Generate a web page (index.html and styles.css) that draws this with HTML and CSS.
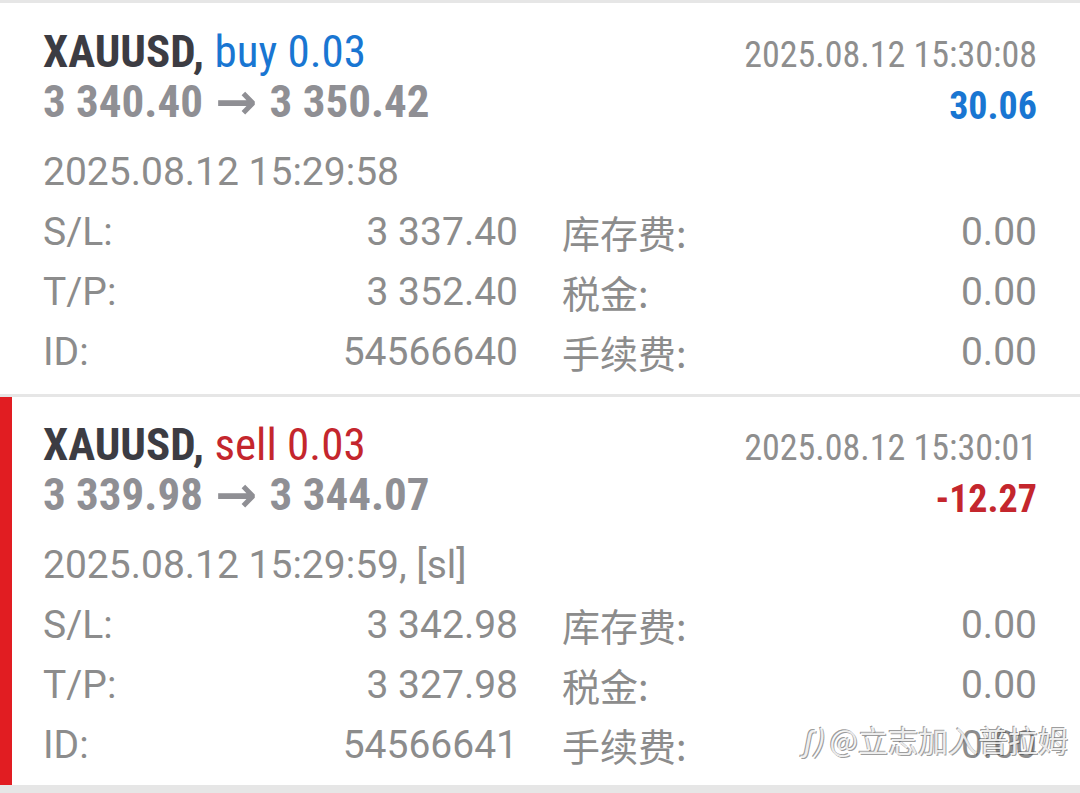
FILE: index.html
```html
<!DOCTYPE html>
<html lang="zh">
<head>
<meta charset="utf-8">
<title>Positions</title>
<link rel="stylesheet" href="styles.css">
</head>
<body>
<div class="page">
  <section class="deal">
    <div class="head">
      <div class="head-left">
        <div class="title"><span class="sym">XAUUSD,</span> <span class="buy">buy 0.03</span></div>
        <div class="prices">3 340.40 <span class="arrow">→</span> 3 350.42</div>
      </div>
      <div class="head-right">
        <div class="time">2025.08.12 15:30:08</div>
        <div class="profit buy-profit">30.06</div>
      </div>
    </div>
    <div class="open-time">2025.08.12 15:29:58</div>
    <div class="grid">
      <div class="cell"><span>S/L:</span><span>3 337.40</span></div>
      <div class="cell"><span class="cjk">库存费:</span><span>0.00</span></div>
      <div class="cell"><span>T/P:</span><span>3 352.40</span></div>
      <div class="cell"><span class="cjk">税金:</span><span>0.00</span></div>
      <div class="cell"><span>ID:</span><span>54566640</span></div>
      <div class="cell"><span class="cjk">手续费:</span><span>0.00</span></div>
    </div>
  </section>
  <section class="deal selected">
    <div class="head">
      <div class="head-left">
        <div class="title"><span class="sym">XAUUSD,</span> <span class="sell">sell 0.03</span></div>
        <div class="prices">3 339.98 <span class="arrow">→</span> 3 344.07</div>
      </div>
      <div class="head-right">
        <div class="time">2025.08.12 15:30:01</div>
        <div class="profit sell-profit">-12.27</div>
      </div>
    </div>
    <div class="open-time">2025.08.12 15:29:59, [sl]</div>
    <div class="grid">
      <div class="cell"><span>S/L:</span><span>3 342.98</span></div>
      <div class="cell"><span class="cjk">库存费:</span><span>0.00</span></div>
      <div class="cell"><span>T/P:</span><span>3 327.98</span></div>
      <div class="cell"><span class="cjk">税金:</span><span>0.00</span></div>
      <div class="cell"><span>ID:</span><span>54566641</span></div>
      <div class="cell"><span class="cjk">手续费:</span><span>0.00</span></div>
    </div>
    <div class="watermark"><span class="wm-logo">ʃ)</span> @立志加入普拉姆</div>
  </section>
</div>
</body>
</html>
```
FILE: styles.css
```css
html, body {
  margin: 0;
  padding: 0;
  background: #e6e6e6;
}
.page {
  width: 1080px;
  height: 793px;
  padding-top: 3px;
  box-sizing: border-box;
  display: flex;
  flex-direction: column;
  gap: 3px;
}
.deal {
  position: relative;
  background: #ffffff;
  padding: 24px 43px 10px 43px;
  height: 391px;
  box-sizing: border-box;
}
.deal.selected {
  height: 388px;
  padding-top: 23px;
  border-left: 12px solid #e11d22;
  padding-left: 31px;
}
.head {
  display: flex;
  justify-content: space-between;
  font-family: "Roboto Condensed", Roboto, sans-serif;
  font-stretch: 75%;
}
.title, .prices {
  height: 50px;
  line-height: 50px;
  font-weight: bold;
  white-space: nowrap;
}
.title {
  font-size: 45px;
}
.sym { color: #3c3c43; }
.buy { color: #1976d2; font-weight: normal; }
.sell { color: #c4262d; font-weight: normal; }
.prices {
  font-size: 45px;
  color: #8f8f94;
}
.arrow {
  display: inline-block;
  margin: 0 2px;
  font-family: "DejaVu Sans", sans-serif;
  font-weight: bold;
  font-size: 50px;
  font-stretch: normal;
  line-height: 50px;
  vertical-align: top;
}
.head-right {
  text-align: right;
}
.time {
  height: 50px;
  line-height: 56px;
  font-size: 36px;
  color: #8e8e8e;
}
.profit {
  height: 50px;
  line-height: 58px;
  font-size: 38px;
  font-weight: bold;
}
.buy-profit { color: #1976d2; }
.sell-profit { color: #c4262d; }
.open-time, .cell {
  font-family: Roboto, "Noto Sans CJK SC", sans-serif;
  font-size: 39px;
  color: #8c8c8c;
  height: 60px;
  line-height: 60px;
  white-space: nowrap;
}
.open-time {
  margin-top: 15px;
}
.grid {
  display: grid;
  grid-template-columns: 475px 475px;
  column-gap: 44px;
}
.cell {
  display: flex;
  justify-content: space-between;
}
.cjk {
  font-family: "Noto Sans CJK SC", sans-serif;
  font-size: 38px;
}
.watermark {
  position: absolute;
  right: 12px;
  bottom: 24px;
  font-family: "Noto Sans CJK SC", sans-serif;
  font-size: 30px;
  color: rgba(255, 255, 255, 0.85);
  text-shadow: -1px -1px 0 rgba(90, 90, 90, 0.6), 1px 1px 0 rgba(60, 60, 60, 0.5);
  white-space: nowrap;
}
.wm-logo {
  font-style: italic;
}
```
